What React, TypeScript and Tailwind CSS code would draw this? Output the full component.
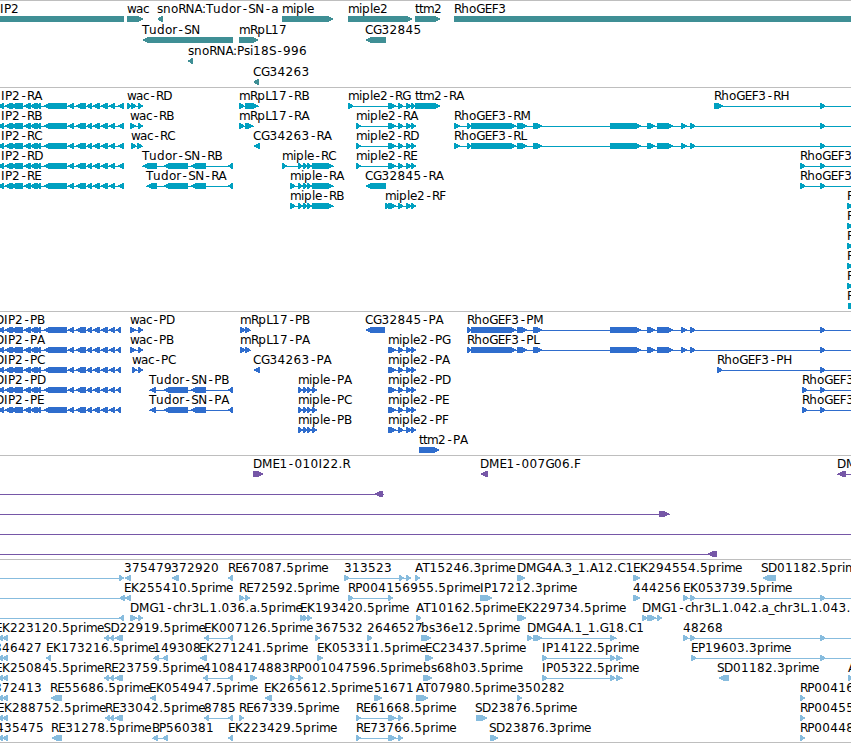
type Seg = [number, number]

interface Feature {
  row: number
  x: number
  name?: string
  dir: 1 | -1
  segs: Seg[]
  line?: Seg
}

interface TrackData {
  id: string
  height: number
  pitch: number
  color: string
  features: Feature[]
}

const END = 860

// advance widths of the label characters, in px
const ADVANCE: Record<string, number> = {
  ".": 4, ":": 4, "-": 7, _: 5.3,
  A: 7.6, B: 7, C: 8, D: 9, E: 7, F: 6.5, G: 8.5, H: 8.5, I: 4, K: 8, L: 5.8, M: 10.4, N: 9, P: 7, R: 7.3, S: 7, T: 7,
  a: 7, b: 8, c: 6, d: 8, e: 7, h: 7.8, i: 3, l: 3, m: 11, n: 8, o: 7.2, p: 8, r: 5, s: 6, t: 4, u: 8, w: 9,
}

const f = (row: number, x: number, name: string | undefined, dir: 1 | -1, segs: Seg[], line?: Seg): Feature => ({
  row,
  x,
  name,
  dir,
  segs,
  line,
})

const dip2: Seg[] = [
  [-3, 4], [4, 13], [10, 23], [23, 31], [30, 36], [33, 38], [36, 41], [43, 67], [67, 74], [75, 86], [86, 92],
  [92, 100], [100, 108], [108, 115],
]
const tudor: Seg[] = [[163, 188], [190, 206], [228, 233]]
const miple: Seg[] = [[298, 303], [303, 307], [307, 312]]
const miple2: Seg[] = [[388, 397], [398, 404], [406, 412], [411, 416]]
const rho: Seg[] = [
  [467, 471], [471, 517], [517, 528], [533, 543], [610, 642], [647, 656], [657, 674], [681, 688], [690, 696],
  [820, 826],
]

const genes: Feature[] = [
  f(0, 0, "IP2", -1, [[-20, 124]]),
  f(0, 127, "wac", 1, [[127, 144]]),
  f(0, 157, "snoRNA:Tudor-SN-a", -1, [[157, 163]]),
  f(0, 282, "miple", 1, [[282, 334]]),
  f(0, 348, "miple2", 1, [[348, 413]]),
  f(0, 415, "ttm2", 1, [[415, 441]]),
  f(0, 454, "RhoGEF3", 1, [[454, 870]]),
  f(1, 142, "Tudor-SN", -1, [[142, 233]]),
  f(1, 239, "mRpL17", 1, [[239, 259]]),
  f(1, 365, "CG32845", -1, [[365, 386]]),
  f(2, 188, "snoRNA:Psi18S-996", -1, [[188, 193]]),
  f(3, 253, "CG34263", -1, [[253, 259]]),
]

const transcripts: Feature[] = [
  ...["RA", "RB", "RC", "RD", "RE"].map((s, i) => f(i, 1, `IP2-${s}`, -1, [...dip2, [117, 124]])),
  f(0, 127, "wac-RD", 1, [[127, 132], [131, 137], [138, 143]]),
  f(1, 130, "wac-RB", 1, [[130, 137], [138, 143]]),
  f(2, 131, "wac-RC", 1, [[131, 137], [137, 143]]),
  f(3, 142, "Tudor-SN-RB", -1, [[142, 157], ...tudor]),
  f(4, 146, "Tudor-SN-RA", -1, [[146, 157], ...tudor]),
  f(0, 239, "mRpL17-RB", 1, [[239, 245], [245, 259]]),
  f(1, 239, "mRpL17-RA", 1, [[239, 245], [245, 254]]),
  f(2, 253, "CG34263-RA", -1, [[253, 260]]),
  f(3, 282, "miple-RC", 1, [[282, 287], ...miple, [312, 334]]),
  f(4, 290, "miple-RA", 1, [[290, 296], ...miple, [312, 334]]),
  f(5, 290, "miple-RB", 1, [[290, 296], ...miple, [312, 334]]),
  f(0, 348, "miple2-RG", 1, [[348, 354], ...miple2]),
  f(0, 415, "ttm2-RA", 1, [[415, 441]]),
  f(1, 356, "miple2-RA", 1, [[356, 361], ...miple2]),
  f(2, 356, "miple2-RD", 1, [[356, 361], ...miple2]),
  f(3, 356, "miple2-RE", 1, [[356, 361], ...miple2]),
  f(4, 365, "CG32845-RA", -1, [[365, 386]]),
  f(5, 385, "miple2-RF", 1, [[385, 391], ...miple2]),
  f(1, 454, "RhoGEF3-RM", 1, [[454, 461], ...rho], [454, END]),
  f(2, 454, "RhoGEF3-RL", 1, [[454, 461], ...rho], [454, END]),
  f(0, 714, "RhoGEF3-RH", 1, [[714, 724], [820, 826]], [714, END]),
  f(3, 800, "RhoGEF3", 1, [[800, 806], [820, 826]], [800, END]),
  f(4, 800, "RhoGEF3", 1, [[800, 806], [820, 826]], [800, END]),
  ...[5, 6, 7, 8, 9].map((row) => f(row, 847, "R", 1, [[847, 853]])),
  f(10, 847, "R", 1, [[848, END]]),
]

const proteins: Feature[] = [
  ...["PB", "PA", "PC", "PD", "PE"].map((s, i) => f(i, -5, `DIP2-${s}`, -1, [...dip2, [116, 121]])),
  f(0, 130, "wac-PD", 1, [[130, 137], [138, 143]]),
  f(1, 130, "wac-PB", 1, [[130, 137], [138, 143]]),
  f(2, 132, "wac-PC", 1, [[132, 137], [138, 143]]),
  f(3, 149, "Tudor-SN-PB", -1, [[149, 156], ...tudor]),
  f(4, 149, "Tudor-SN-PA", -1, [[149, 156], ...tudor]),
  f(0, 240, "mRpL17-PB", 1, [[240, 246], [245, 251]]),
  f(1, 240, "mRpL17-PA", 1, [[240, 246], [245, 251]]),
  f(2, 253, "CG34263-PA", -1, [[253, 260]]),
  f(0, 365, "CG32845-PA", -1, [[365, 385]]),
  ...["PA", "PC", "PB"].map((s, i) => f(i + 3, 298, `miple-${s}`, 1, [...miple, [312, 317]])),
  ...["PG", "PA", "PD", "PE", "PF"].map((s, i) => f(i + 1, 388, `miple2-${s}`, 1, miple2)),
  f(6, 419, "ttm2-PA", 1, [[419, 440]]),
  f(0, 467, "RhoGEF3-PM", 1, rho, [467, END]),
  f(1, 467, "RhoGEF3-PL", 1, rho, [467, END]),
  f(2, 717, "RhoGEF3-PH", 1, [[717, 723], [820, 826]], [717, END]),
  f(3, 802, "RhoGEF3", 1, [[802, 808], [820, 826]], [802, END]),
  f(4, 802, "RhoGEF3", 1, [[802, 808], [820, 826]], [802, END]),
]

const clones: Feature[] = [
  f(0, 253, "DME1-010I22.R", 1, [[253, 264]]),
  f(0, 480, "DME1-007G06.F", -1, [[480, 488]]),
  f(0, 837, "DM", -1, [[837, 846]], [837, END]),
  f(1, 0, undefined, -1, [[374, 383]], [0, 384]),
  f(2, 0, undefined, 1, [[659, 670]], [0, 670]),
  f(3, 0, undefined, 1, [], [0, END]),
  f(4, 0, undefined, -1, [[707, 717]], [0, 717]),
]

const left: Seg[] = [[-4, 3], [2, 8]]

const ests: Feature[] = [
  f(0, 0, undefined, 1, [[119, 124]], [0, 124]),
  f(0, 124, "375479", -1, [[124, 131]]),
  f(0, 171, "372920", -1, [[171, 179]]),
  f(0, 228, "RE67087.5prime", -1, [[228, 233]]),
  f(0, 344, "313523", 1, [[344, 350], [399, 404], [406, 411]]),
  f(0, 415, "AT15246.3prime", 1, [[415, 420]]),
  f(0, 517, "DMG4A.3_1.A12.C1", 1, [[517, 526]]),
  f(0, 633, "EK294554.5prime", 1, [[633, 641]]),
  f(0, 761, "SD01182.5prime", -1, [[762, 776]]),
  f(1, 124, "EK255410.5prime", -1, [[119, 125], [124, 131]], [0, 131]),
  f(1, 239, "RE72592.5prime", 1, [[239, 245], [245, 250]]),
  f(1, 348, "RP004156955.5prime", 1, [[348, 354], [388, 393]]),
  f(1, 480, "IP17212.3prime", 1, [[480, 493]]),
  f(1, 633, "444256", 1, [[633, 641]]),
  f(1, 683, "EK053739.5prime", 1, [[683, 689], [690, 696], [820, 826]], [683, END]),
  f(2, 0, undefined, -1, [[119, 124]], [0, 124]),
  f(2, 130, "DMG1-chr3L.1.036.a.5prime", 1, [[130, 138], [138, 143]]),
  f(2, 300, "EK193420.5prime", 1, [[300, 304], [303, 308], [307, 312]]),
  f(2, 416, "AT10162.5prime", 1, [[416, 422]]),
  f(2, 517, "EK229734.5prime", 1, [[517, 527]]),
  f(2, 642, "DMG1-chr3L.1.042.a_chr3L.1.043.", 1, [[642, 648], [647, 657], [657, 662]]),
  f(3, -5, "EK223120.5prime", -1, left),
  f(3, 103.5, "SD22919.5prime", -1, [[104, 109], [109, 114], [114, 123]]),
  f(3, 204, "EK007126.5prime", -1, [[204, 209], [228, 233]]),
  f(3, 315, "367532", 1, [[315, 320]]),
  f(3, 367, "2646527", 1, [[367, 373]]),
  f(3, 421, "bs36e12.5prime", 1, [[421, 432]]),
  f(3, 527, "DMG4A.1_1.G18.C1", 1, [[527, 533], [533, 543], [610, 617]]),
  f(3, 683, "48268", 1, [[683, 689], [690, 696], [820, 826]], [683, END]),
  f(4, -6, "346427", -1, left),
  f(4, 46, "EK173216.5prime", -1, [[46, 51]]),
  f(4, 153, "149308", -1, [[153, 159], [162, 168]]),
  f(4, 199, "EK271241.5prime", -1, [[199, 207]]),
  f(4, 317, "EK053311.5prime", 1, [[317, 324]]),
  f(4, 425, "EC23437.5prime", 1, [[425, 434]]),
  f(4, 542, "IP14122.5prime", 1, [[542, 548], [610, 616], [616, 623]]),
  f(4, 691, "EP19603.3prime", 1, [[691, 697], [820, 826]], [691, END]),
  f(5, -5, "EK250845.5prime", -1, left),
  f(5, 104, "RE23759.5prime", -1, [[104, 109], [109, 114], [114, 123]]),
  f(5, 203, "410841", -1, [[203, 208], [228, 233]]),
  f(5, 250, "74883", 1, [[250, 258]]),
  f(5, 290, "RP001047596.5prime", 1, [[290, 296], [298, 303]]),
  f(5, 423, "bs68h03.5prime", 1, [[423, 433]]),
  f(5, 542, "IP05322.5prime", 1, [[542, 548], [610, 616], [616, 623]]),
  f(5, 717, "SD01182.3prime", -1, [[718, 729]]),
  f(5, 848, "A", 1, [[848, 854]]),
  f(6, -6, "372413", -1, left),
  f(6, 50, "RE55686.5prime", -1, [[50, 62]]),
  f(6, 149, "EK054947.5prime", -1, [[149, 156]]),
  f(6, 264, "EK265612.5prime", -1, [[264, 272]]),
  f(6, 374, "51671", 1, [[374, 383]]),
  f(6, 416, "AT07980.5prime", 1, [[416, 429]]),
  f(6, 517, "350282", 1, [[517, 522]]),
  f(6, 800, "RP00416", 1, [[800, 805]]),
  f(7, -3, "EK288752.5prime", -1, left),
  f(7, 105, "RE33042.5prime", -1, [[105, 110], [110, 114], [114, 123]]),
  f(7, 204, "8785", -1, [[204, 209], [228, 233]]),
  f(7, 239, "RE67339.5prime", 1, [[239, 244]]),
  f(7, 356, "RE61668.5prime", 1, [[356, 361], [388, 397], [398, 403]]),
  f(7, 475, "SD23876.5prime", 1, [[476, 488]]),
  f(7, 800, "RP00455", 1, [[800, 805]]),
  f(8, -4, "435475", -1, left),
  f(8, 51, "RE31278.5prime", -1, [[51, 62]]),
  f(8, 152, "BP560381", -1, [[152, 158], [162, 168]]),
  f(8, 228, "EK223429.5prime", -1, [[228, 233]]),
  f(8, 356, "RE73766.5prime", 1, [[356, 361], [388, 397], [398, 403]]),
  f(8, 489, "SD23876.3prime", 1, [[490, 499]]),
  f(8, 800, "RP00448", 1, [[800, 805]]),
]

const tracks: TrackData[] = [
  { id: "genes", height: 86, pitch: 21, color: "#3f8f95", features: genes },
  { id: "transcripts", height: 223, pitch: 20, color: "#00a0c0", features: transcripts },
  { id: "proteins", height: 143, pitch: 20, color: "#2f6dcd", features: proteins },
  { id: "clones", height: 103, pitch: 20, color: "#7657a7", features: clones },
  { id: "ests", height: 182, pitch: 20, color: "#87bcde", features: ests },
]

const charPositions = (text: string, start: number) => {
  let x = start
  return [...text]
    .map((ch) => {
      // hyphens are narrower than their cell, so centre them
      const at = ch === "-" ? x + 1.4 : x
      x += ADVANCE[ch] ?? 8
      return at.toFixed(1)
    })
    .join(" ")
}

const arrowPoints = ([a, b]: Seg, y: number, dir: 1 | -1) => {
  const tip = Math.min(b - a - 1, 6.5)
  return dir === 1
    ? `${a},${y} ${b - tip},${y} ${b},${y + 2.8} ${b},${y + 3.2} ${b - tip},${y + 6} ${a},${y + 6}`
    : `${b},${y} ${a + tip},${y} ${a},${y + 2.8} ${a},${y + 3.2} ${a + tip},${y + 6} ${b},${y + 6}`
}

const FeatureGlyph = ({ feature, pitch }: { feature: Feature; pitch: number }) => {
  const { row, x, name, dir, segs } = feature
  const y = 15 + row * pitch
  const line = feature.line ?? (segs.length > 1 ? [segs[0][0], segs[segs.length - 1][1]] : null)

  return (
    <g>
      {line && <rect x={line[0]} y={y + 3} width={line[1] - line[0]} height={1} />}
      {segs.map((seg, i) => (
        <polygon key={i} points={arrowPoints(seg, y, dir)} />
      ))}
      {name && (
        <text x={charPositions(name, x)} y={y - 3} className="fill-black">
          {name}
        </text>
      )}
    </g>
  )
}

const Track = ({ track }: { track: TrackData }) => (
  <section className="border-t border-[#bebebe]">
    <svg
      width="851"
      height={track.height}
      fill={track.color}
      shapeRendering="crispEdges"
      className="block overflow-hidden text-[12px] font-['DejaVu_Sans',sans-serif]"
    >
      {track.features.map((feature, i) => (
        <FeatureGlyph key={i} feature={feature} pitch={track.pitch} />
      ))}
    </svg>
  </section>
)

const App = () => {
  return (
    <main className="flex h-[743px] w-[851px] flex-col overflow-hidden border-b border-[#bebebe] bg-white">
      {tracks.map((track) => (
        <Track key={track.id} track={track} />
      ))}
    </main>
  )
}

export default App
